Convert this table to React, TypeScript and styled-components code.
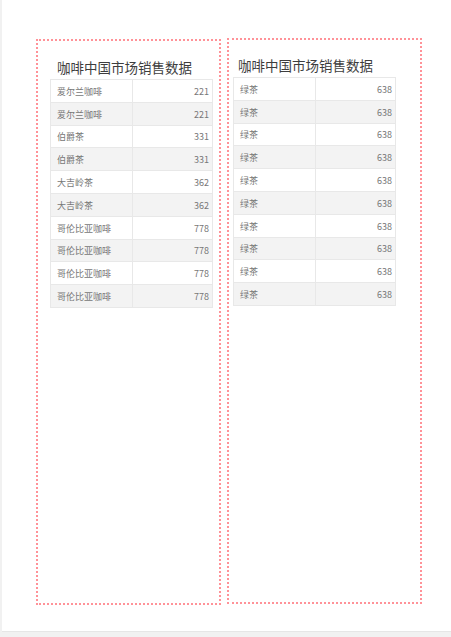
import React from "react";
import styled, { createGlobalStyle } from "styled-components";

const Global = createGlobalStyle`
  html, body { margin: 0; padding: 0; background: #f1f1f1; }
  body { font-family: "Noto Sans CJK SC", "Noto Sans", sans-serif; }
`;

const Page = styled.div`
  margin-left: 2px;
  width: 449px;
  height: 632px;
  background: #ffffff;
  box-sizing: border-box;
  padding: 38px 0 0 34px;
  display: flex;
  align-items: flex-start;
  gap: 6px;
  border-bottom: 1px solid #e6e6e6;
`;

const Panel = styled.div<{ $w: number; $top: number; $pad: number }>`
  box-sizing: border-box;
  width: ${(p) => p.$w}px;
  height: 566px;
  margin-top: ${(p) => p.$top}px;
  border: 2px dotted rgba(255, 80, 90, 0.62);
  padding: 0 ${(p) => p.$pad}px;
  display: flex;
  flex-direction: column;
`;

const Title = styled.div<{ $mt: number; $indent: number }>`
  margin-top: ${(p) => p.$mt}px;
  padding-left: ${(p) => p.$indent}px;
  font-size: 13.5px;
  line-height: 18px;
  color: #3d3d3d;
  height: 18px;
  margin-bottom: 3px;
  white-space: nowrap;
`;

const Table = styled.div`
  width: 163px;
  border: 1px solid #e8e8e8;
  border-bottom: none;
  box-sizing: border-box;
`;

const Row = styled.div<{ $alt: boolean }>`
  display: grid;
  grid-template-columns: 81px 1fr;
  height: 22.8px;
  box-sizing: border-box;
  border-bottom: 1px solid #e8e8e8;
  background: ${(p) => (p.$alt ? "#f3f3f3" : "#ffffff")};
`;

const Cell = styled.div<{ $right?: boolean }>`
  display: flex;
  align-items: center;
  justify-content: ${(p) => (p.$right ? "flex-end" : "flex-start")};
  padding: 1px 3px 0 6px;
  font-size: 9px;
  color: #777777;
  border-left: ${(p) => (p.$right ? "1px solid #e8e8e8" : "none")};
`;

const leftData: [string, number][] = [
  ["爱尔兰咖啡", 221],
  ["爱尔兰咖啡", 221],
  ["伯爵茶", 331],
  ["伯爵茶", 331],
  ["大吉岭茶", 362],
  ["大吉岭茶", 362],
  ["哥伦比亚咖啡", 778],
  ["哥伦比亚咖啡", 778],
  ["哥伦比亚咖啡", 778],
  ["哥伦比亚咖啡", 778],
];

const rightData: [string, number][] = Array.from({ length: 10 }, () => ["绿茶", 638]);

function DataTable({ rows }: { rows: [string, number][] }) {
  return (
    <Table>
      {rows.map(([name, v], i) => (
        <Row key={i} $alt={i % 2 === 1}>
          <Cell>{name}</Cell>
          <Cell $right>{v}</Cell>
        </Row>
      ))}
    </Table>
  );
}

export default function App() {
  return (
    <>
      <Global />
      <Page>
        <Panel $w={185} $top={1} $pad={12}>
          <Title $mt={17} $indent={7}>咖啡中国市场销售数据</Title>
          <DataTable rows={leftData} />
        </Panel>
        <Panel $w={195} $top={0} $pad={4}>
          <Title $mt={16} $indent={5}>咖啡中国市场销售数据</Title>
          <DataTable rows={rightData} />
        </Panel>
      </Page>
    </>
  );
}
